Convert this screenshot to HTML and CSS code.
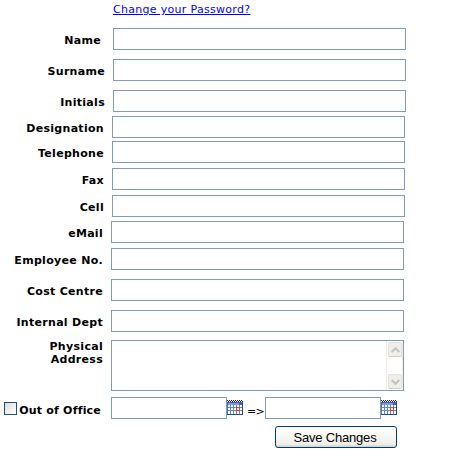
FILE: index.html
```html
<!DOCTYPE html>
<html lang="en">
<head>
    <meta charset="UTF-8">
    <title>Edit Profile</title>
    <link rel="stylesheet" href="styles.css">
</head>
<body>
    <svg width="0" height="0" class="defs">
        <symbol id="calendar" viewBox="0 0 16 16" shape-rendering="crispEdges">
            <path fill="#3b62c4" d="M0 2h16v3H0z"/>
            <path fill="#6f9cf0" d="M1 3h11v2H1z"/>
            <path stroke="#222" stroke-dasharray="1 1" d="M0 .5h16M1 1.5h15"/>
            <path fill="#fff" d="M1 5h14v9H1z"/>
            <path stroke="#6289d0" d="M0 7.5h16M0 10.5h16M3.5 5v9M6.5 5v9M9.5 5v9M12.5 5v9"/>
            <path stroke="#5579b8" d="M.5 5v9"/>
            <path stroke="#244894" d="M15.5 3v12M0 14.5h16"/>
            <path fill="#f04010" d="M9 7h4v4H9z"/>
            <path fill="#fff" d="M10 8h2v2h-2z"/>
        </symbol>
    </svg>
    <form class="profile">
        <a class="password" href="#">Change your Password?</a>
        <div class="row name"><label for="name">Name</label><input type="text" id="name"></div>
        <div class="row loose"><label for="surname">Surname</label><input type="text" id="surname"></div>
        <div class="row loose"><label for="initials">Initials</label><input type="text" id="initials"></div>
        <div class="contact">
            <div class="row"><label for="designation">Designation</label><input type="text" id="designation"></div>
            <div class="row tight"><label for="telephone">Telephone</label><input type="text" id="telephone"></div>
            <div class="row"><label for="fax">Fax</label><input type="text" id="fax"></div>
            <div class="row"><label for="cell">Cell</label><input type="text" id="cell"></div>
        </div>
        <div class="work">
            <div class="row"><label for="email">eMail</label><input type="text" id="email"></div>
            <div class="row"><label for="employee">Employee No.</label><input type="text" id="employee"></div>
            <div class="row loose"><label for="cost">Cost Centre</label><input type="text" id="cost"></div>
            <div class="row loose"><label for="dept">Internal Dept</label><input type="text" id="dept"></div>
            <div class="row address">
                <label for="address">Physical<br>Address</label>
                <div class="textarea">
                    <textarea id="address"></textarea>
                    <div class="scrollbar">
                        <span class="arrow"><svg width="9" height="6" viewBox="0 0 9 6"><path d="M.7 5l3.8-3.8L8.3 5"/></svg></span>
                        <span class="arrow"><svg width="9" height="6" viewBox="0 0 9 6"><path d="M.7 1l3.8 3.8L8.3 1"/></svg></span>
                    </div>
                </div>
            </div>
            <div class="row office">
                <span class="check"></span>
                <label for="from">Out of Office</label>
                <input type="text" id="from" class="date">
                <svg class="cal"><use href="#calendar"/></svg>
                <span class="to">=&gt;</span>
                <input type="text" id="until" class="date">
                <svg class="cal"><use href="#calendar"/></svg>
            </div>
        </div>
        <button type="button">Save Changes</button>
    </form>
</body>
</html>
```
FILE: styles.css
```css
body {
    margin: 0;
    background-color: #fff;
    color: #000;
    font-family: Verdana, "DejaVu Sans", sans-serif;
    font-size: 11px;
    line-height: 13px;
    letter-spacing: 0.3px;
}
.defs {
    display: block;
}
.profile {
    display: flex;
    flex-direction: column;
    width: 406px;
}
.password {
    align-self: flex-start;
    margin: 3px 0 0 113px;
    color: #00f;
    white-space: nowrap;
}
.row {
    display: flex;
    height: 22px;
    margin-top: 5px;
}
.row.name {
    margin-top: 12px;
}
.row.loose {
    margin-top: 9px;
}
.row.tight {
    margin-top: 3px;
}
label {
    box-sizing: border-box;
    width: 113px;
    padding: 6px 8px 0 0;
    font-weight: bold;
    text-align: right;
    white-space: nowrap;
}
.name label {
    padding-right: 12px;
}
.contact {
    margin-top: -1px;
}
.contact label {
    width: 112px;
}
.work label {
    width: 111px;
}
.contact, .work {
    display: flex;
    flex-direction: column;
}
.work {
    margin-top: -1px;
}
input, textarea {
    box-sizing: border-box;
    width: 293px;
    height: 22px;
    margin: 0;
    padding: 1px 3px;
    border: 1px solid #7f9db9;
    border-radius: 0;
    outline: none;
    background-color: #fff;
}
.row.address {
    height: 51px;
    margin-top: 8px;
}
.address label {
    padding-top: 0;
}
.textarea {
    display: flex;
    box-sizing: border-box;
    width: 293px;
    height: 51px;
    border: 1px solid #7f9db9;
}
textarea {
    width: 274px;
    height: 49px;
    border: 0;
    resize: none;
}
.scrollbar {
    display: flex;
    flex-direction: column;
    justify-content: space-between;
    box-sizing: border-box;
    width: 17px;
    height: 49px;
    border: solid #eeede5;
    border-width: 0 1px;
    background-color: #fefefb;
}
.arrow {
    display: flex;
    align-items: center;
    justify-content: center;
    box-sizing: border-box;
    width: 14px;
    height: 15px;
    margin: 1px 0 1px 1px;
    border: 1px solid #e5e4dc;
    border-bottom-color: #d2d0c4;
    border-radius: 2px;
    background-color: #efeee8;
}
.arrow path {
    fill: none;
    stroke: #c5c4bc;
    stroke-width: 2;
}
.row.office {
    margin-top: 6px;
}
.check {
    box-sizing: border-box;
    width: 13px;
    height: 13px;
    margin: 5px 0 0 4px;
    border: 1px solid #1c5180;
    background: linear-gradient(135deg, #dcdcd7, #fff);
}
.work .office label {
    width: 94px;
    padding: 7px 10px 0 0;
    letter-spacing: 0.2px;
}
input.date {
    width: 116px;
}
.cal {
    width: 16px;
    height: 16px;
    margin-top: 3px;
}
.to {
    box-sizing: border-box;
    width: 22px;
    padding: 8px 0 0 4px;
    letter-spacing: -0.6px;
}
button {
    width: 122px;
    height: 22px;
    margin: 7px 0 0 275px;
    padding: 0 2px 0 0;
    border: 1px solid #003c74;
    border-radius: 3px;
    background: linear-gradient(#fff, #f0f0ea 85%, #d6d0c5);
    color: #000;
    font-family: "Liberation Sans", Arial, sans-serif;
    font-size: 13px;
    letter-spacing: -0.2px;
}
```
